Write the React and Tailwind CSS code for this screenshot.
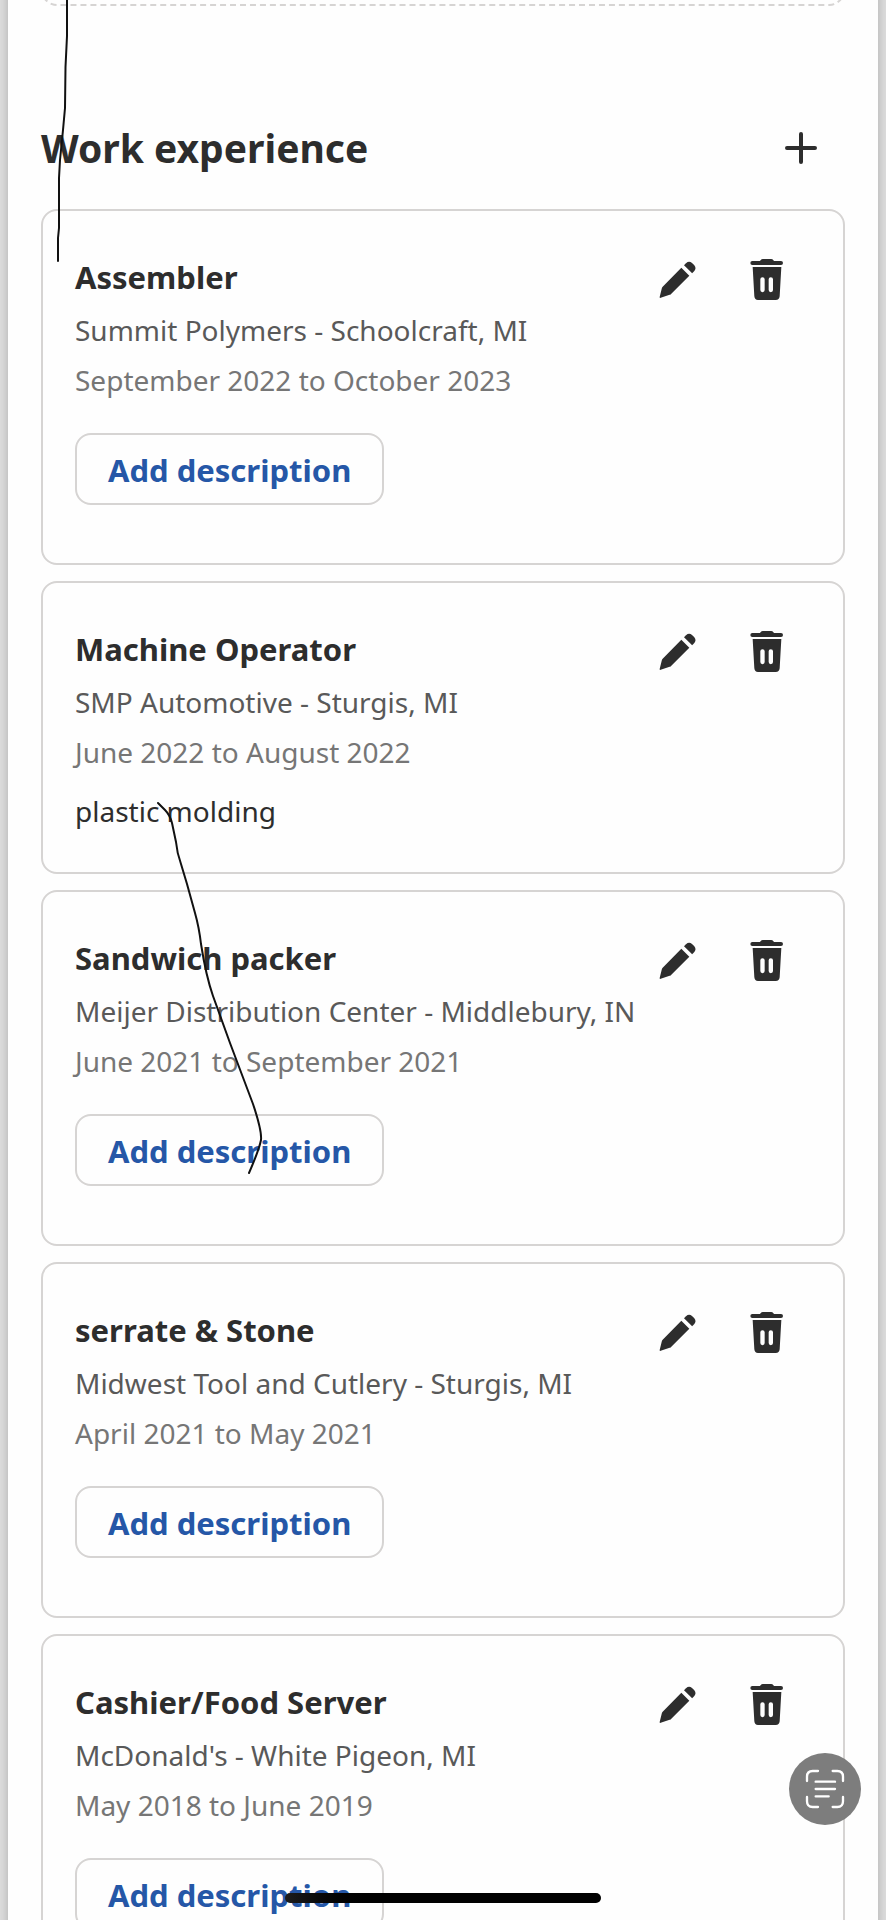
const jobs = [
  { title: "Assembler", company: "Summit Polymers - Schoolcraft, MI", dates: "September 2022 to October 2023" },
  {
    title: "Machine Operator",
    company: "SMP Automotive - Sturgis, MI",
    dates: "June 2022 to August 2022",
    description: "plastic molding",
  },
  { title: "Sandwich packer", company: "Meijer Distribution Center - Middlebury, IN", dates: "June 2021 to September 2021" },
  { title: "serrate & Stone", company: "Midwest Tool and Cutlery - Sturgis, MI", dates: "April 2021 to May 2021" },
  { title: "Cashier/Food Server", company: "McDonald's - White Pigeon, MI", dates: "May 2018 to June 2019" },
];

function PlusIcon() {
  return (
    <svg viewBox="0 0 48 48" className="size-12" fill="none" stroke="currentColor" strokeWidth="4" strokeLinecap="round" aria-hidden="true">
      <path d="M24 10v28M10 24h28" />
    </svg>
  );
}

function PencilIcon() {
  return (
    <svg viewBox="99 78 144 144" className="size-12" fill="currentColor" aria-hidden="true">
      <path d="M184 113.500L208 137.500L152.500 192.500Q151 194 149 194.500L122 203.500Q118.500 204.500 119 201L125.500 175Q126 172.500 128 170.500Z" />
      <path d="M192 105.500L198 99.500Q207 92 216 99L223 106Q230 115 223 123L216.500 129.500Z" />
    </svg>
  );
}

function TrashIcon() {
  return (
    <svg viewBox="369 78 144 144" className="size-12" fill="currentColor" aria-hidden="true">
      <path d="M397 93H420Q423 87 428 87H454Q459 87 462 93H483A6 6 0 0 1 483 105H397A6 6 0 0 1 397 93Z" />
      <path
        fillRule="evenodd"
        d="M398 111H484L479 199Q478 210 467 210H414Q404 210 403 199ZM421 148V180A6.500 6.500 0 0 0 434 180V148A6.500 6.500 0 0 0 421 148ZM446 148V180A6.500 6.500 0 0 0 459 180V148A6.500 6.500 0 0 0 446 148Z"
      />
    </svg>
  );
}

function ScanTextIcon() {
  return (
    <svg viewBox="0 0 120 120" className="size-10" fill="none" stroke="currentColor" strokeWidth="7" strokeLinecap="round" aria-hidden="true">
      <path d="M6 36V23Q6 6 23 6H39M83 6H97Q114 6 114 23V36M114 84V97Q114 114 97 114H83M39 114H23Q6 114 6 97V84" />
      <path d="M32 38H90M32 60H90M32 82H71" />
    </svg>
  );
}

function JobCard({ job }) {
  return (
    <li
      className={`flex items-start justify-between rounded-2xl border-2 border-[#d6d4d3] pl-8 pr-[52px] pt-[38px] ${
        job.description ? "pb-[39px]" : "pb-[58px]"
      }`}
    >
      <div className="min-w-0">
        <h2 className="text-[31px] font-bold leading-[56px]">{job.title}</h2>
        <p className="text-[28px] leading-[50px] text-[#595959]">{job.company}</p>
        <p className="text-[28px] leading-[50px] text-[#767676]">{job.dates}</p>
        {job.description ? (
          <p className="mt-3 text-[28px] leading-[44px]">{job.description}</p>
        ) : (
          <button type="button" className="mt-7 h-[72px] rounded-2xl border-2 border-[#d6d4d3] px-[31px] pt-0.5 text-[31px] font-bold leading-10 text-[#2557a7]">
            Add description
          </button>
        )}
      </div>
      <div className="mt-[7px] flex shrink-0 gap-[42px]">
        <button type="button" aria-label={`Edit ${job.title}`}>
          <PencilIcon />
        </button>
        <button type="button" aria-label={`Delete ${job.title}`}>
          <TrashIcon />
        </button>
      </div>
    </li>
  );
}

export default function App() {
  return (
    <div className="relative h-screen overflow-hidden bg-[#dedede] px-2 font-['Noto_Sans',sans-serif] text-[#2d2d2d]">
      <main className="min-h-full bg-[#fefefe] px-[33px] shadow-[0_0_10px_rgba(0,0,0,0.22)]">
        <div className="-mt-20 h-[86px] rounded-2xl border-2 border-dashed border-[#d6d4d3]" />
        <div className="mt-28 flex h-[60px] items-center justify-between pr-5">
          <h1 className="text-[39px] font-bold leading-[60px]">Work experience</h1>
          <button type="button" aria-label="Add work experience">
            <PlusIcon />
          </button>
        </div>
        <ul className="mt-[31px] flex flex-col gap-4">
          {jobs.map((job) => (
            <JobCard key={job.title} job={job} />
          ))}
        </ul>
      </main>

      <svg
        viewBox="0 0 300 1200"
        className="pointer-events-none absolute left-0 top-0 h-[1200px] w-[300px]"
        fill="none"
        stroke="#111"
        strokeWidth="2"
        strokeLinecap="round"
        strokeLinejoin="round"
        aria-hidden="true"
      >
        <path d="M67 0V36L65.500 67L65 108L63 130L60 160L59 178V228L58 238V261" />
        <path d="M158 803L165 810Q170 815 172 823L176 842Q177 853 181 864L187 884L195 913Q199 927 201 944Q206 976 213 996L230 1043L253 1104Q262 1131 261 1140Q259 1150 249 1173" />
      </svg>

      <button
        type="button"
        aria-label="Scan text"
        className="absolute bottom-[95px] right-[25px] flex size-[72px] items-center justify-center rounded-full bg-[#7d7d7d] text-white"
      >
        <ScanTextIcon />
      </button>
      <div className="absolute bottom-[17px] left-1/2 h-[10px] w-[316px] -translate-x-1/2 rounded-full bg-gradient-to-r from-[#1c1c1c] via-black via-30% to-black" />
    </div>
  );
}
